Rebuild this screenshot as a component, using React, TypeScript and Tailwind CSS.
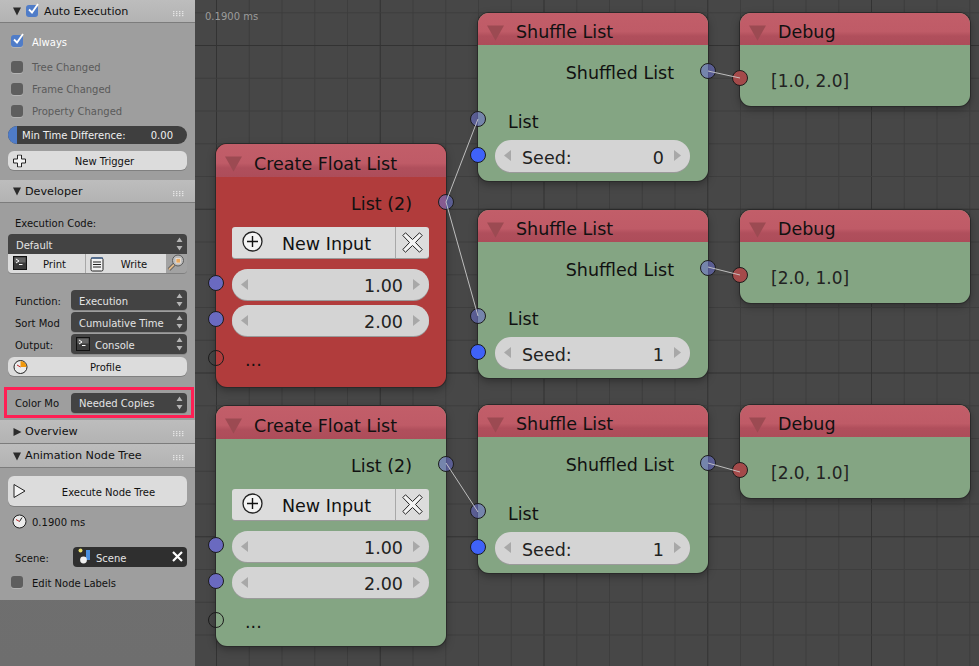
import React from "react";

const range = (n: number) => Array.from({ length: n }, (_, i) => i);

function Tri({ down = true, className = "" }: { down?: boolean; className?: string }) {
  return (
    <svg width="10" height="10" viewBox="0 0 10 10" className={"shrink-0 " + className}>
      <path d={down ? "M1 1.5H9L5 9.5Z" : "M1.5 1V9L9.5 5Z"} fill="#2b2b2b" />
    </svg>
  );
}

function Grip() {
  return (
    <svg width="11" height="6" viewBox="0 0 11 6" className="absolute right-[11px] top-[11px]">
      {[0, 2, 4].flatMap((y) =>
        [0, 3, 6, 9].map((x) => <rect key={x + "-" + y} x={x} y={y} width="1.4" height="1.2" fill="#e4e4e4" />),
      )}
    </svg>
  );
}

function PanelHeader({ title, children, className = "" }: { title: string; children?: React.ReactNode; className?: string }) {
  return (
    <div className={"relative flex items-center pl-[12px] bg-[linear-gradient(#bdbdbd,#b3b3b3)] border-b border-[#7c7c7c] text-[11.2px] text-[#111] " + className}>
      {children ?? <Tri down />}
      <span className="ml-[3px] translate-y-[1px]">{title}</span>
      <Grip />
    </div>
  );
}

function Check({ on = false, className = "" }: { on?: boolean; className?: string }) {
  return (
    <span className={"relative block w-[12px] h-[12px] shrink-0 rounded-[3px] shadow-[0_1px_0_#b4b4b4] " + (on ? "bg-[#4f7cc8] " : "bg-[#5e5e5e] ") + className}>
      {on && (
        <svg width="14" height="14" viewBox="0 0 14 14" className="absolute left-[0px] -top-[3px]">
          <path d="M3 7.5L6 10.5L12 2" fill="none" stroke="#fff" strokeWidth="1.8" />
        </svg>
      )}
    </span>
  );
}

function CheckRow({ label, on = false, dim = false }: { label: string; on?: boolean; dim?: boolean }) {
  return (
    <div className="flex items-center h-[22px] pl-[11px] text-[10px]">
      <Check on={on} />
      <span className={"ml-[9px] " + (dim ? "text-[#5a5a5a]" : on ? "text-white translate-y-[1px]" : "text-[#111] translate-y-[1px]")}>{label}</span>
    </div>
  );
}

function UpDown() {
  return (
    <svg width="7" height="14" viewBox="0 0 7 14" className="absolute right-[4px] top-[3px]">
      <path d="M3.5 0.5L6.5 5H0.5ZM3.5 13.5L6.5 9H0.5Z" fill="#b4b4b4" />
    </svg>
  );
}

function ConsoleIcon({ className = "" }: { className?: string }) {
  return (
    <svg width="14" height="14" viewBox="0 0 14 14" className={"shrink-0 " + className}>
      <rect x="0.5" y="0.5" width="13" height="13" fill="#3a3a3a" stroke="#111" />
      <rect x="1.5" y="1.5" width="11" height="5" fill="#666" />
      <path d="M3 3L6 5L3 7M6 8.5H9.5" fill="none" stroke="#fff" strokeWidth="1" />
    </svg>
  );
}

function Dropdown({ label, icon, className = "" }: { label: string; icon?: React.ReactNode; className?: string }) {
  return (
    <div className={"relative flex items-center h-[20px] pl-[8px] bg-[#434343] rounded-[4px] text-[10px] text-[#e4e4e4] shadow-[0_1px_0_#8a8a8a] " + className}>
      {icon}
      <span className="translate-y-[1px]">{label}</span>
      <UpDown />
    </div>
  );
}

function LabeledRow({ label, children, className = "" }: { label: string; children: React.ReactNode; className?: string }) {
  return (
    <div className={"flex items-center pl-[15px] pr-[8px] text-[10px] text-[#111] " + className}>
      <span className="w-[56px] overflow-hidden whitespace-nowrap translate-y-[1px]">{label}</span>
      {children}
    </div>
  );
}

function Button({ label, icon, className = "" }: { label: string; icon?: React.ReactNode; className?: string }) {
  return (
    <div className={"relative flex items-center justify-center bg-[#dcdcdc] rounded-[6px] text-[10px] text-[#111] shadow-[0_1px_0_#808080] " + className}>
      {icon && <span className="absolute left-[5px] top-1/2 -translate-y-1/2 flex">{icon}</span>}
      <span className="translate-y-[1px]">{label}</span>
    </div>
  );
}

function ClockIcon({ pie = false }: { pie?: boolean }) {
  return (
    <svg width="15" height="15" viewBox="0 0 15 15" className="shrink-0">
      <circle cx="7.5" cy="7.5" r="6.5" fill="#ececec" stroke="#222" />
      {pie ? (
        <path d="M7.5 7.5V1.5A6 6 0 0 1 13.5 7.5Z" fill="#f0980c" />
      ) : (
        <path d="M7.5 7.5L10 3.5" stroke="#222" />
      )}
      <path d="M7.5 7.5L4 5.5" stroke="#c02020" />
    </svg>
  );
}

function Sidebar() {
  return (
    <div className="flex flex-col w-[195px] shrink-0 h-[666px] bg-[linear-gradient(#747474,#6e6e6e)]">
      <div className="bg-[#9e9e9e] h-[600px] flex flex-col">
        <PanelHeader title="Auto Execution" className="h-[23px]">
          <Tri down />
          <Check on className="ml-[4px] mr-[3px]" />
        </PanelHeader>

        <div className="mt-[7px]">
          <CheckRow label="Always" on />
        </div>
        <div className="mt-[4px]">
          <CheckRow label="Tree Changed" dim />
          <CheckRow label="Frame Changed" dim />
          <CheckRow label="Property Changed" dim />
        </div>
        <div className="mt-[4px] mx-[8px] h-[18px] rounded-full overflow-hidden bg-[#3f3f3f] flex items-center justify-between text-[10px] text-[#f0f0f0] pr-[14px]">
          <div className="flex items-center h-full">
            <span className="block w-[9px] h-full bg-[#4f7cc8]" />
            <span className="ml-[5px]">Min Time Difference:</span>
          </div>
          <span>0.00</span>
        </div>
        <Button
          label="New Trigger"
          className="mt-[7px] mx-[8px] h-[19px] pl-[14px]"
          icon={
            <svg width="13" height="13" viewBox="0 0 13 13">
              <path d="M4.5 0.5H8.5V4.5H12.5V8.5H8.5V12.5H4.5V8.5H0.5V4.5H4.5Z" fill="#f4f4f4" stroke="#222" />
            </svg>
          }
        />

        <PanelHeader title="Developer" className="mt-[10px] h-[23px]" />
        <div className="mt-[12px] h-[16px] pl-[15px] flex items-center text-[10px] text-[#111]">
          <span>Execution Code:</span>
        </div>
        <Dropdown label="Default" className="mt-[3px] mx-[8px] rounded-b-none shadow-none pl-[7px]" />
        <div className="mx-[8px] h-[19px] flex text-[10px] text-[#111] rounded-b-[4px] overflow-hidden shadow-[0_1px_0_#808080]">
          <div className="relative w-[78px] flex items-center justify-center pl-[16px] bg-[#dcdcdc] border-r border-[#a8a8a8]">
            <ConsoleIcon className="absolute left-[5px] top-[2px]" />
            <span className="translate-y-[1px]">Print</span>
          </div>
          <div className="relative w-[80px] flex items-center justify-center pl-[16px] bg-[#dcdcdc]">
            <svg width="14" height="16" viewBox="0 0 14 16" className="absolute left-[4px] top-[2px]">
              <rect x="1" y="2" width="12" height="13" rx="1.5" fill="#f2f2f2" stroke="#222" />
              <path d="M2 1V3M4 1V3M6 1V3M8 1V3M10 1V3M12 1V3" stroke="#2a5a9a" />
              <path d="M3 6H11M3 8.5H11M3 11H11" stroke="#222" />
            </svg>
            <span className="translate-y-[1px]">Write</span>
          </div>
          <div className="relative flex-1 bg-[#a2a2a2]">
            <svg width="18" height="18" viewBox="0 0 18 18" className="absolute left-[1px] top-[0px]">
              <path d="M7 10.5L2 15.5" stroke="#555" strokeWidth="3.6" />
              <path d="M7 10.5L2 15.5" stroke="#e0b888" strokeWidth="1.8" />
              <circle cx="11" cy="6.5" r="5.5" fill="#bcbcbc" stroke="#5a5a5a" />
              <rect x="9" y="4.5" width="4.5" height="4.5" fill="#e8a860" stroke="#f0f0f0" strokeWidth="0.6" />
            </svg>
          </div>
        </div>

        <LabeledRow label="Function:" className="mt-[17px] h-[20px]">
          <Dropdown label="Execution" className="flex-1" />
        </LabeledRow>
        <LabeledRow label="Sort Mod" className="mt-[2px] h-[20px]">
          <Dropdown label="Cumulative Time" className="flex-1" />
        </LabeledRow>
        <LabeledRow label="Output:" className="mt-[2px] h-[20px]">
          <Dropdown label="Console" className="flex-1" icon={<ConsoleIcon className="mr-[5px] -ml-[3px]" />} />
        </LabeledRow>
        <Button label="Profile" className="mt-[3px] mx-[8px] h-[19px] pl-[16px]" icon={<ClockIcon pie />} />

        <div className="mt-[11px] ml-[4px] mr-[1px] h-[31px] border-[3px] border-[#ff1f54] flex items-center pl-[8px] pr-[4px] text-[10px] text-[#111]">
          <span className="w-[56px] translate-y-[1px]">Color Mo</span>
          <Dropdown label="Needed Copies" className="flex-1" />
        </div>

        <PanelHeader title="Overview" className="mt-[2px] h-[24px]">
          <Tri down={false} />
        </PanelHeader>
        <PanelHeader title="Animation Node Tree" className="h-[24px]" />

        <Button
          label="Execute Node Tree"
          className="mt-[8px] mx-[8px] h-[30px] pl-[22px]"
          icon={
            <svg width="13" height="15" viewBox="0 0 13 15">
              <path d="M1 1L12 7.5L1 14Z" fill="#f4f4f4" stroke="#222" />
            </svg>
          }
        />
        <div className="mt-[5px] h-[20px] pl-[12px] flex items-center gap-[5px] text-[10px] text-[#111]">
          <ClockIcon />
          <span className="translate-y-[1px]">0.1900 ms</span>
        </div>
        <div className="mt-[16px] h-[20px] pl-[15px] pr-[8px] flex items-center text-[10px] text-[#111]">
          <span className="w-[58px] translate-y-[1px]">Scene:</span>
          <div className="relative flex-1 h-[20px] rounded-[4px] bg-[#2f2f2f] flex items-center text-[#e4e4e4] pl-[23px]">
            <svg width="16" height="16" viewBox="0 0 16 16" className="absolute left-[5px] top-[1px]">
              <rect x="8" y="2" width="4" height="10" fill="#4a90e0" />
              <circle cx="2.5" cy="2.5" r="2" fill="#e8e070" />
              <circle cx="5.5" cy="12" r="3.4" fill="#f0f0f0" />
            </svg>
            <span className="translate-y-[1px]">Scene</span>
            <svg width="11" height="11" viewBox="0 0 11 11" className="absolute right-[4px] top-[4px]">
              <path d="M1 1L10 10M10 1L1 10" stroke="#fff" strokeWidth="2.2" />
            </svg>
          </div>
        </div>
        <div className="mt-[4px]">
          <CheckRow label="Edit Node Labels" />
        </div>
      </div>
    </div>
  );
}

function Grid() {
  const step = 32.75;
  const xs = range(26).map((i) => 21.5 + (i - 1) * step);
  const ys = range(24).map((i) => 45.5 + (i - 2) * step);
  return (
    <svg width="784" height="666" className="absolute inset-0">
      {xs.map((x, i) => (
        <line key={"v" + i} x1={x} x2={x} y1="0" y2="666" stroke={(i - 1) % 5 === 0 ? "#333333" : "#3e3e3e"} />
      ))}
      {ys.map((y, i) => (
        <line key={"h" + i} y1={y} y2={y} x1="0" x2="784" stroke={(i - 2) % 5 === 0 ? "#333333" : "#3e3e3e"} />
      ))}
    </svg>
  );
}

function Socket({ kind, className }: { kind: "list" | "float" | "int" | "out" | "empty"; className: string }) {
  const tone = {
    list: "bg-[#6a70c8]/60",
    float: "bg-[#6a6ac0]",
    int: "bg-[#3f62f8]",
    out: "bg-[#a44a4a]",
    empty: "bg-transparent",
  }[kind];
  return <span className={"absolute z-20 block w-[16px] h-[16px] rounded-full border border-[#1c1c1c] " + tone + " " + className} />;
}

function NodeHeader({ title, h }: { title: string; h: string }) {
  return (
    <div className={"flex items-center pt-[7px] rounded-t-[11px] bg-[linear-gradient(#c25e69_0%,#bf5b67_58%,#b04f5c_72%,#ad4d5a_100%)] text-[17.5px] text-[#111] " + h}>
      <svg width="17" height="16" viewBox="0 0 17 16" className="ml-[9px]">
        <path d="M0 0.5H17L8.5 15.5Z" fill="#9c4a52" />
      </svg>
      <span className="ml-[12px]">{title}</span>
    </div>
  );
}

function NumberField({ left, value, className = "" }: { left?: string; value: string; className?: string }) {
  return (
    <div className={"relative flex items-center justify-between rounded-full bg-[#d4d4d4] shadow-[0_1px_0_#9a9a9a] text-[17.5px] text-[#222] pl-[27px] pr-[26px] " + className}>
      <svg width="7" height="11" viewBox="0 0 7 11" className="absolute left-[9px] top-[10px]">
        <path d="M7 0V11L0 5.5Z" fill="#a8a8a8" />
      </svg>
      <span className="translate-y-[2px]">{left ?? ""}</span>
      <span className="translate-y-[2px]">{value}</span>
      <svg width="7" height="11" viewBox="0 0 7 11" className="absolute right-[9px] top-[10px]">
        <path d="M0 0V11L7 5.5Z" fill="#a8a8a8" />
      </svg>
    </div>
  );
}

function FloatNode({ body, className }: { body: string; className: string }) {
  return (
    <div className={"absolute z-10 w-[230px] rounded-[11px] shadow-[0_0_0_1px_#2a2a2a,0_3px_8px_rgba(0,0,0,0.35)] text-[#111] " + body + " " + className}>
      <NodeHeader title="Create Float List" h="h-[33px]" />
      <div className="mt-[15px] h-[22px] flex items-center justify-end pr-[34px] text-[17.5px]">
        <span className="translate-y-[1px]">List (2)</span>
      </div>
      <div className="mt-[13px] ml-[16px] mr-[17px] h-[31px] flex bg-[#dcdcdc] rounded-[3px] text-[17.5px] shadow-[0_1px_0_#9a9a9a]">
        <div className="relative flex-1 flex items-center pl-[50px] border-r border-[#a8a8a8]">
          <svg width="21" height="21" viewBox="0 0 21 21" className="absolute left-[10px] top-[4px]">
            <circle cx="10.5" cy="10.5" r="9.5" fill="#f4f4f4" stroke="#222" strokeWidth="1.3" />
            <path d="M10.5 5V16M5 10.5H16" stroke="#111" strokeWidth="1.4" />
          </svg>
          <span className="translate-y-[2px]">New Input</span>
        </div>
        <div className="w-[33px] flex items-center justify-center">
          <svg width="21" height="21" viewBox="0 0 21 21">
            <path d="M3.5 0.8L10.5 7.5L17.5 0.8L20.2 3.5L13.5 10.5L20.2 17.5L17.5 20.2L10.5 13.5L3.5 20.2L0.8 17.5L7.5 10.5L0.8 3.5Z" fill="#f4f4f4" stroke="#222" />
          </svg>
        </div>
      </div>
      <NumberField value="1.00" className="mt-[11px] ml-[16px] mr-[17px] h-[31px]" />
      <NumberField value="2.00" className="mt-[5px] ml-[16px] mr-[17px] h-[31px]" />
      <div className="mt-[13px] pl-[29px] h-[22px] flex items-center text-[17.5px]">...</div>
      <Socket kind="list" className="-right-[8px] top-[50px]" />
      <Socket kind="float" className="-left-[8px] top-[131px]" />
      <Socket kind="float" className="-left-[8px] top-[167px]" />
      <Socket kind="empty" className="-left-[8px] top-[206px]" />
    </div>
  );
}

function ShuffleNode({ seed, className }: { seed: string; className: string }) {
  return (
    <div className={"absolute z-10 w-[230px] h-[168px] rounded-[11px] bg-[#84a583] shadow-[0_0_0_1px_#2a2a2a,0_3px_8px_rgba(0,0,0,0.35)] text-[#111] " + className}>
      <NodeHeader title="Shuffle List" h="h-[32px]" />
      <div className="mt-[16px] h-[22px] flex items-center justify-end pr-[34px] text-[17.5px]">
        <span className="translate-y-[1px]">Shuffled List</span>
      </div>
      <div className="mt-[27px] h-[22px] flex items-center pl-[30px] text-[17.5px]">
        <span className="translate-y-[1px]">List</span>
      </div>
      <NumberField left="Seed:" value={seed} className="mt-[8px] ml-[17px] mr-[18px] h-[32px]" />
      <Socket kind="list" className="-right-[8px] top-[50px]" />
      <Socket kind="list" className="-left-[8px] top-[98px]" />
      <Socket kind="int" className="-left-[8px] top-[134px]" />
    </div>
  );
}

function DebugNode({ text, className }: { text: string; className: string }) {
  return (
    <div className={"absolute z-10 w-[230px] h-[93px] rounded-[11px] bg-[#84a583] shadow-[0_0_0_1px_#2a2a2a,0_3px_8px_rgba(0,0,0,0.35)] text-[#111] " + className}>
      <NodeHeader title="Debug" h="h-[32px]" />
      <div className="mt-[26px] h-[22px] flex items-center pl-[31px] text-[17px] text-[#222]">
        <span>{text}</span>
      </div>
      <Socket kind="out" className="-left-[8px] top-[57px]" />
    </div>
  );
}

function Wires() {
  const wires = [
    [251, 202, 283, 119],
    [251, 202, 283, 316],
    [251, 463, 283, 512],
    [513, 71, 545, 78],
    [513, 267, 545, 275],
    [513, 463, 545, 472],
  ];
  return (
    <svg width="784" height="666" className="absolute inset-0 z-10 pointer-events-none">
      {wires.map(([a, b, c, d], i) => (
        <line key={i} x1={a} y1={b} x2={c} y2={d} stroke="#d2d2d2" strokeWidth="1" strokeOpacity="0.85" />
      ))}
    </svg>
  );
}

export default function App() {
  return (
    <div className="flex w-[979px] h-[666px] overflow-hidden font-['DejaVu_Sans',sans-serif]">
      <Sidebar />
      <div className="relative flex-1 bg-[#474747] overflow-hidden">
        <Grid />
        <span className="absolute left-[10px] top-[9px] text-[10px] text-[#9c9c9c]">0.1900 ms</span>
        <FloatNode body="bg-[#b13c3c] h-[243px]" className="left-[21px] top-[144px]" />
        <FloatNode body="bg-[#84a583] h-[240px]" className="left-[21px] top-[406px]" />
        <ShuffleNode seed="0" className="left-[283px] top-[13px]" />
        <ShuffleNode seed="1" className="left-[283px] top-[210px]" />
        <ShuffleNode seed="1" className="left-[283px] top-[405px]" />
        <DebugNode text="[1.0, 2.0]" className="left-[545px] top-[13px]" />
        <DebugNode text="[2.0, 1.0]" className="left-[545px] top-[210px]" />
        <DebugNode text="[2.0, 1.0]" className="left-[545px] top-[405px]" />
        <Wires />
      </div>
    </div>
  );
}
